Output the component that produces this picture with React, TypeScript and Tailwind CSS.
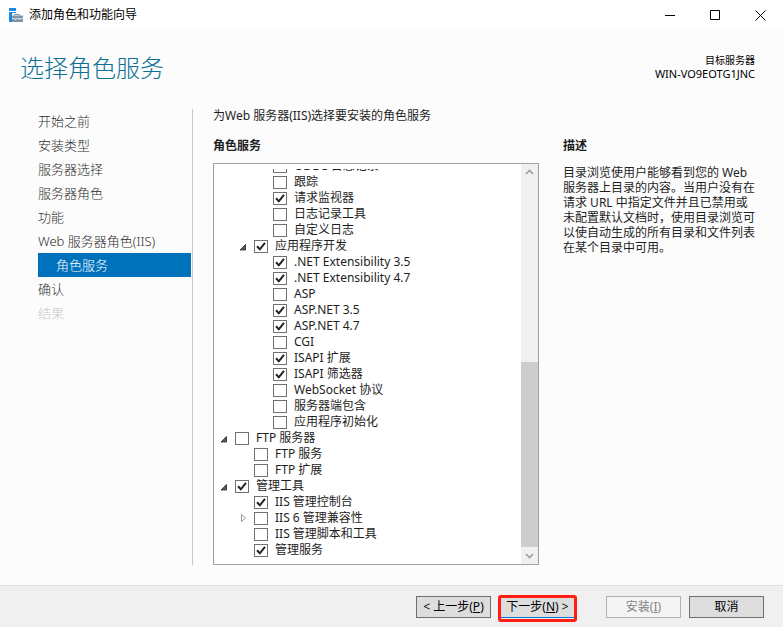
import { useState } from "react";

type Expander = "open" | "closed";

interface RoleItem {
  label: string;
  level: 0 | 1 | 2;
  checked?: boolean;
  expander?: Expander;
}

const steps = [
  { label: "开始之前" },
  { label: "安装类型" },
  { label: "服务器选择" },
  { label: "服务器角色" },
  { label: "功能" },
  { label: "Web 服务器角色(IIS)" },
  { label: "角色服务", current: true },
  { label: "确认" },
  { label: "结果", disabled: true },
];

const roles: RoleItem[] = [
  { label: "ODBC 日志记录", level: 2 },
  { label: "跟踪", level: 2 },
  { label: "请求监视器", level: 2, checked: true },
  { label: "日志记录工具", level: 2 },
  { label: "自定义日志", level: 2 },
  { label: "应用程序开发", level: 1, checked: true, expander: "open" },
  { label: ".NET Extensibility 3.5", level: 2, checked: true },
  { label: ".NET Extensibility 4.7", level: 2, checked: true },
  { label: "ASP", level: 2 },
  { label: "ASP.NET 3.5", level: 2, checked: true },
  { label: "ASP.NET 4.7", level: 2, checked: true },
  { label: "CGI", level: 2 },
  { label: "ISAPI 扩展", level: 2, checked: true },
  { label: "ISAPI 筛选器", level: 2, checked: true },
  { label: "WebSocket 协议", level: 2 },
  { label: "服务器端包含", level: 2 },
  { label: "应用程序初始化", level: 2 },
  { label: "FTP 服务器", level: 0, expander: "open" },
  { label: "FTP 服务", level: 1 },
  { label: "FTP 扩展", level: 1 },
  { label: "管理工具", level: 0, checked: true, expander: "open" },
  { label: "IIS 管理控制台", level: 1, checked: true },
  { label: "IIS 6 管理兼容性", level: 1, expander: "closed" },
  { label: "IIS 管理脚本和工具", level: 1 },
  { label: "管理服务", level: 1, checked: true },
];

const indents = ["pl-[5px]", "pl-6", "pl-[43px]"];

function AppIcon() {
  return (
    <svg width="14" height="14" viewBox="0 0 14 14" aria-hidden="true">
      <path d="M0 0h7v3H0zM0 4h7v1H3v9H0z" fill="#1e88dc" />
      <path d="M5.500 7.500v-1h5v1" fill="none" stroke="#7f97a8" />
      <path d="M3 7.500h11V14H3z" fill="#7f97a8" />
      <path d="M3 10.500h3v1h1v-1h3v1h1v-1h3" fill="none" stroke="#e4ebf0" strokeWidth="0.800" />
    </svg>
  );
}

function ExpanderIcon({ state }: { state?: Expander }) {
  if (!state) return <span className="w-4 shrink-0" />;
  return (
    <button
      type="button"
      aria-label={state === "open" ? "折叠" : "展开"}
      className="flex h-4 w-4 shrink-0 items-center"
    >
      <svg width="10" height="10" viewBox="0 0 10 10" aria-hidden="true">
        {state === "open" ? (
          <path d="M7.500 3.500V9H2z" fill="#595959" stroke="#262626" strokeWidth="0.800" />
        ) : (
          <path d="M3.500 1.500v7l4-3.500z" fill="#fff" stroke="#989898" />
        )}
      </svg>
    </button>
  );
}

function RoleRow({ item }: { item: RoleItem }) {
  const [checked, setChecked] = useState(Boolean(item.checked));
  return (
    <li className={`flex h-4 shrink-0 items-center ${indents[item.level]}`}>
      <ExpanderIcon state={item.expander} />
      <label className="flex items-center gap-[7px] whitespace-nowrap">
        <span className="grid">
          <input
            type="checkbox"
            checked={checked}
            onChange={() => setChecked(!checked)}
            className="col-start-1 row-start-1 h-[13px] w-[14px] appearance-none border border-[#707070] bg-white"
          />
          {checked && (
            <svg
              width="14"
              height="13"
              viewBox="0 0 14 13"
              aria-hidden="true"
              className="pointer-events-none col-start-1 row-start-1"
            >
              <path d="M3 6.300l2.800 3L11 2.800" fill="none" stroke="#212121" strokeWidth="2" />
            </svg>
          )}
        </span>
        <span className="leading-4">{item.label}</span>
      </label>
    </li>
  );
}

function Chevron({ up }: { up?: boolean }) {
  return (
    <svg width="9" height="9" viewBox="0 0 9 9" aria-hidden="true">
      <path d={up ? "M1 6l3.500-3.500L8 6" : "M1 3l3.500 3.500L8 3"} fill="none" stroke="#9a9a9a" strokeWidth="1.600" />
    </svg>
  );
}

const buttonBase = "h-[22px] w-[75px] whitespace-nowrap border text-xs leading-4";

export default function App() {
  return (
    <div className="flex h-screen flex-col bg-[#fcfcfc] font-['Noto_Sans','Noto_Sans_CJK_SC',sans-serif] text-xs text-[#1e1e1e]">
      <header className="flex h-[30px] shrink-0 items-center bg-white pl-[9px] text-black">
        <AppIcon />
        <span className="ml-[6px] flex-1">添加角色和功能向导</span>
        <button type="button" aria-label="最小化" className="grid h-7 w-[45px] place-items-center">
          <svg width="11" height="11" viewBox="0 0 11 11" stroke="currentColor" aria-hidden="true">
            <path d="M0 5.500h10" />
          </svg>
        </button>
        <button type="button" aria-label="最大化" className="grid h-7 w-[45px] place-items-center">
          <svg width="11" height="11" viewBox="0 0 11 11" fill="none" stroke="currentColor" aria-hidden="true">
            <path d="M.5.500h9v9h-9z" />
          </svg>
        </button>
        <button type="button" aria-label="关闭" className="grid h-7 w-[45px] place-items-center">
          <svg width="11" height="11" viewBox="0 0 11 11" stroke="currentColor" aria-hidden="true">
            <path d="M.5.500l10 10M10.500.500l-10 10" />
          </svg>
        </button>
      </header>

      <div className="flex h-[79px] shrink-0 justify-between pr-7 pl-5">
        <h1 className="pt-5 text-2xl leading-9 font-light text-[#0b7094]">选择角色服务</h1>
        <div className="pt-6 text-right leading-[13px] text-black">
          <p className="text-[10px]">目标服务器</p>
          <p className="text-[11px]">WIN-VO9EOTG1JNC</p>
        </div>
      </div>

      <main className="flex min-h-0 flex-1 pb-5">
        <nav className="w-[193px] shrink-0 border-r border-[#c8c8c8] pr-px pl-[38px] text-[13px] font-light">
          <ul>
            {steps.map((step) => (
              <li key={step.label}>
                <a
                  href="#"
                  aria-current={step.current ? "step" : undefined}
                  className={`block h-6 leading-6 whitespace-nowrap ${
                    step.current
                      ? "bg-[#0072bc] pl-[18px] text-white"
                      : step.disabled
                        ? "text-[#c8c8c8]"
                        : "text-[#2c2c2c]"
                  }`}
                >
                  {step.label}
                </a>
              </li>
            ))}
          </ul>
        </nav>

        <section className="ml-5 flex min-w-0 flex-1 flex-col">
          <p className="leading-[14px]">为Web 服务器(IIS)选择要安装的角色服务</p>
          <div className="mt-[14px] flex min-h-0 flex-1 gap-6">
            <div className="flex min-w-0 flex-1 flex-col">
              <h2 className="mb-2 leading-[18px] font-bold">角色服务</h2>
              <div className="flex min-h-0 flex-1 border border-[#a0a0a0] bg-white">
                <div className="flex min-h-0 flex-1 pt-[5px]">
                  <ul className="flex flex-1 flex-col justify-end overflow-hidden pb-[6px]">
                    {roles.map((item) => (
                      <RoleRow key={item.label} item={item} />
                    ))}
                  </ul>
                </div>
                <div className="flex w-[17px] flex-col bg-[#f0f0f0]">
                  <button type="button" aria-label="向上滚动" className="grid h-[17px] place-items-center">
                    <Chevron up />
                  </button>
                  <div className="flex-[181]" />
                  <div className="flex-[185] bg-[#cdcdcd]" />
                  <button type="button" aria-label="向下滚动" className="grid h-[17px] place-items-center">
                    <Chevron />
                  </button>
                </div>
              </div>
            </div>
            <aside className="mr-7 w-48 shrink-0">
              <h2 className="mb-[10px] leading-[18px] font-bold">描述</h2>
              <p className="leading-[15px]">
                目录浏览使用户能够看到您的 Web 服务器上目录的内容。当用户没有在请求 URL
                中指定文件并且已禁用或未配置默认文档时，使用目录浏览可以使自动生成的所有目录和文件列表在某个目录中可用。
              </p>
            </aside>
          </div>
        </section>
      </main>

      <footer className="flex h-[42px] shrink-0 items-start justify-end border-t border-[#dfdfdf] bg-[#f0f0f0] pt-[10px] pr-[19px] text-black">
        <button type="button" className={`${buttonBase} border-[#707070] bg-[#dddddd]`}>
          &lt; 上一步(<u>P</u>)
        </button>
        <div className="relative ml-[9px]">
          <button type="button" className={`${buttonBase} border-[#0078d7] bg-[#dddddd]`}>
            下一步(<u>N</u>) &gt;
          </button>
          <span className="pointer-events-none absolute -inset-x-[2px] -top-px -bottom-1 rounded-[3px] border-3 border-[#ff1c12]" />
        </div>
        <button
          type="button"
          disabled
          className={`${buttonBase} ml-[31px] border-[#adb2b5] bg-[#f4f4f4] text-[#838383]`}
        >
          安装(<u>I</u>)
        </button>
        <button type="button" className={`${buttonBase} ml-2 border-[#707070] bg-[#dddddd]`}>
          取消
        </button>
      </footer>
    </div>
  );
}
